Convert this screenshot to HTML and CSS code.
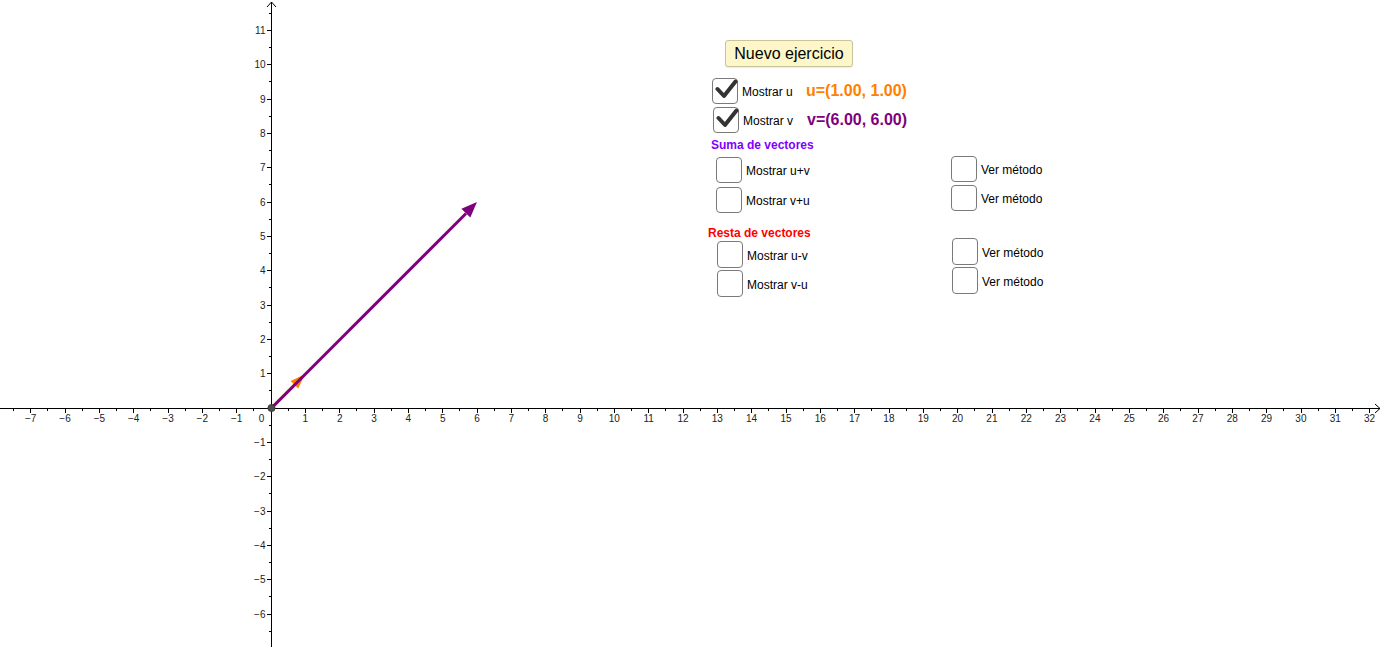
FILE: index.html
```html
<!DOCTYPE html>
<html lang="es">
<head>
<meta charset="utf-8">
<title>Suma y resta de vectores</title>
<link rel="stylesheet" href="styles.css">
</head>
<body>
<div class="app">
  <svg class="canvas" width="1382" height="647" viewBox="0 0 1382 647" xmlns="http://www.w3.org/2000/svg">
    <!-- axes -->
    <g class="axes">
      <line x1="0" y1="408.5" x2="1380" y2="408.5"/>
      <polyline class="arrow" points="1375,404 1380,408.5 1375,413"/>
      <line x1="271.5" y1="2" x2="271.5" y2="647"/>
      <polyline class="arrow" points="267,7 271.5,2 276,7"/>
      <!-- x major ticks -->
      <path d="M30.5 408v5M65.5 408v5M99.5 408v5M133.5 408v5M168.5 408v5M202.5 408v5M236.5 408v5M305.5 408v5M339.5 408v5M374.5 408v5M408.5 408v5M442.5 408v5M477.5 408v5M511.5 408v5M545.5 408v5M580.5 408v5M614.5 408v5M648.5 408v5M683.5 408v5M717.5 408v5M751.5 408v5M786.5 408v5M820.5 408v5M854.5 408v5M889.5 408v5M923.5 408v5M957.5 408v5M992.5 408v5M1026.5 408v5M1060.5 408v5M1095.5 408v5M1129.5 408v5M1163.5 408v5M1198.5 408v5M1232.5 408v5M1266.5 408v5M1301.5 408v5M1335.5 408v5M1369.5 408v5"/>
      <!-- x minor ticks -->
      <path d="M13.5 408v3M47.5 408v3M82.5 408v3M116.5 408v3M150.5 408v3M185.5 408v3M219.5 408v3M253.5 408v3M288.5 408v3M322.5 408v3M356.5 408v3M391.5 408v3M425.5 408v3M459.5 408v3M494.5 408v3M528.5 408v3M562.5 408v3M597.5 408v3M631.5 408v3M665.5 408v3M700.5 408v3M734.5 408v3M768.5 408v3M803.5 408v3M837.5 408v3M871.5 408v3M906.5 408v3M940.5 408v3M974.5 408v3M1009.5 408v3M1043.5 408v3M1077.5 408v3M1112.5 408v3M1146.5 408v3M1180.5 408v3M1215.5 408v3M1249.5 408v3M1283.5 408v3M1318.5 408v3M1352.5 408v3"/>
      <!-- y major ticks -->
      <path d="M267 30.5h5M267 64.5h5M267 99.5h5M267 133.5h5M267 167.5h5M267 202.5h5M267 236.5h5M267 270.5h5M267 305.5h5M267 339.5h5M267 373.5h5M267 442.5h5M267 476.5h5M267 511.5h5M267 545.5h5M267 579.5h5M267 614.5h5"/>
      <!-- y minor ticks -->
      <path d="M269 13.5h3M269 47.5h3M269 81.5h3M269 116.5h3M269 150.5h3M269 184.5h3M269 219.5h3M269 253.5h3M269 287.5h3M269 322.5h3M269 356.5h3M269 390.5h3M269 425.5h3M269 459.5h3M269 493.5h3M269 528.5h3M269 562.5h3M269 596.5h3M269 631.5h3"/>
    </g>
    <!-- x labels -->
    <g class="xlabels">
      <text x="30.7" y="421.5">−7</text>
      <text x="65" y="421.5">−6</text>
      <text x="99.4" y="421.5">−5</text>
      <text x="133.7" y="421.5">−4</text>
      <text x="168" y="421.5">−3</text>
      <text x="202.3" y="421.5">−2</text>
      <text x="236.7" y="421.5">−1</text>
      <text x="261.5" y="421.5">0</text>
      <text x="305.3" y="421.5">1</text>
      <text x="339.7" y="421.5">2</text>
      <text x="374" y="421.5">3</text>
      <text x="408.3" y="421.5">4</text>
      <text x="442.7" y="421.5">5</text>
      <text x="477" y="421.5">6</text>
      <text x="511.3" y="421.5">7</text>
      <text x="545.6" y="421.5">8</text>
      <text x="580" y="421.5">9</text>
      <text x="614.3" y="421.5">10</text>
      <text x="648.6" y="421.5">11</text>
      <text x="683" y="421.5">12</text>
      <text x="717.3" y="421.5">13</text>
      <text x="751.6" y="421.5">14</text>
      <text x="786" y="421.5">15</text>
      <text x="820.3" y="421.5">16</text>
      <text x="854.6" y="421.5">17</text>
      <text x="888.9" y="421.5">18</text>
      <text x="923.3" y="421.5">19</text>
      <text x="957.6" y="421.5">20</text>
      <text x="991.9" y="421.5">21</text>
      <text x="1026.3" y="421.5">22</text>
      <text x="1060.6" y="421.5">23</text>
      <text x="1094.9" y="421.5">24</text>
      <text x="1129.3" y="421.5">25</text>
      <text x="1163.6" y="421.5">26</text>
      <text x="1197.9" y="421.5">27</text>
      <text x="1232.2" y="421.5">28</text>
      <text x="1266.6" y="421.5">29</text>
      <text x="1300.9" y="421.5">30</text>
      <text x="1335.2" y="421.5">31</text>
      <text x="1369.6" y="421.5">32</text>
    </g>
    <!-- y labels -->
    <g class="ylabels">
      <text x="265.5" y="34">11</text>
      <text x="265.5" y="68.2">10</text>
      <text x="265.5" y="102.5">9</text>
      <text x="265.5" y="136.9">8</text>
      <text x="265.5" y="171.2">7</text>
      <text x="265.5" y="205.5">6</text>
      <text x="265.5" y="239.9">5</text>
      <text x="265.5" y="274.2">4</text>
      <text x="265.5" y="308.5">3</text>
      <text x="265.5" y="342.8">2</text>
      <text x="265.5" y="377.2">1</text>
      <text x="265.5" y="445.8">−1</text>
      <text x="265.5" y="480.2">−2</text>
      <text x="265.5" y="514.5">−3</text>
      <text x="265.5" y="548.8">−4</text>
      <text x="265.5" y="583.2">−5</text>
      <text x="265.5" y="617.5">−6</text>
    </g>
    <!-- vector u -->
    <g class="vec-u">
      <line x1="271.5" y1="408" x2="294.5" y2="385"/>
      <polygon points="305,374.2 298.2,388.6 290.6,381"/>
    </g>
    <!-- vector v -->
    <g class="vec-v">
      <line x1="271.5" y1="408" x2="466" y2="213.5"/>
      <polygon points="477,202 470.3,217.6 461.4,208.7"/>
    </g>
    <circle class="origin" cx="271.5" cy="408" r="3.6"/>
  </svg>

  <div class="panel">
    <button class="btn" type="button">Nuevo ejercicio</button>

    <div class="vrow vrow-u">
      <span class="box checked"><svg viewBox="0 0 26 26" width="26" height="26"><polyline points="5.5,11 12,18 23.5,3.5"/></svg></span>
      <span class="lbl lbl-fixed">Mostrar u</span>
      <span class="val val-u">u=(1.00, 1.00)</span>
    </div>
    <div class="vrow vrow-v">
      <span class="box checked"><svg viewBox="0 0 26 26" width="26" height="26"><polyline points="5.5,11 12,18 23.5,3.5"/></svg></span>
      <span class="lbl lbl-fixed">Mostrar v</span>
      <span class="val val-v">v=(6.00, 6.00)</span>
    </div>

    <div class="heading heading-suma">Suma de vectores</div>
    <div class="group group-suma">
      <div class="col col-left">
        <div class="opt"><span class="box"></span><span class="lbl">Mostrar u+v</span></div>
        <div class="opt"><span class="box"></span><span class="lbl">Mostrar v+u</span></div>
      </div>
      <div class="col col-right">
        <div class="opt"><span class="box"></span><span class="lbl">Ver método</span></div>
        <div class="opt"><span class="box"></span><span class="lbl">Ver método</span></div>
      </div>
    </div>

    <div class="heading heading-resta">Resta de vectores</div>
    <div class="group group-resta">
      <div class="col col-left">
        <div class="opt"><span class="box"></span><span class="lbl">Mostrar u-v</span></div>
        <div class="opt"><span class="box"></span><span class="lbl">Mostrar v-u</span></div>
      </div>
      <div class="col col-right">
        <div class="opt"><span class="box"></span><span class="lbl">Ver método</span></div>
        <div class="opt"><span class="box"></span><span class="lbl">Ver método</span></div>
      </div>
    </div>
  </div>
</div>
</body>
</html>
```

FILE: styles.css
```css
html, body {
  margin: 0;
  padding: 0;
  background: #ffffff;
  overflow: hidden;
}

.app {
  position: relative;
  width: 1382px;
  height: 647px;
  font-family: "Liberation Sans", Arial, sans-serif;
  color: #000;
}

.canvas {
  display: block;
}

.axes line,
.axes path,
.axes .arrow {
  stroke: #000;
  stroke-width: 1;
  fill: none;
}

.xlabels text,
.ylabels text {
  font-family: "Liberation Sans", Arial, sans-serif;
  font-size: 10px;
  fill: #222;
}

.xlabels text {
  text-anchor: middle;
}

.ylabels text {
  text-anchor: end;
}

.vec-u line {
  stroke: #ff7f00;
  stroke-width: 3;
}

.vec-u polygon {
  fill: #ff7f00;
}

.vec-v line {
  stroke: #7f007f;
  stroke-width: 3;
}

.vec-v polygon {
  fill: #7f007f;
}

.origin {
  fill: #4d4d4d;
  stroke: #333;
  stroke-width: 0.8;
}

/* Control panel laid over the canvas */
.panel {
  position: absolute;
  left: 706px;
  top: 40px;
  display: flex;
  flex-direction: column;
  align-items: flex-start;
}

.btn {
  margin: 0 0 0 19px;
  width: 128px;
  height: 27px;
  box-sizing: border-box;
  padding: 0;
  background: #fcf6c9;
  border: 1px solid #c9c39c;
  border-radius: 3px;
  font-family: "Liberation Sans", Arial, sans-serif;
  font-size: 16px;
  color: #000;
  line-height: 25px;
  box-shadow: 0 1px 1px rgba(0, 0, 0, 0.08);
}

.vrow {
  display: flex;
  align-items: center;
  height: 26px;
}

.vrow-u {
  margin: 11px 0 0 6px;
}

.vrow-v {
  margin: 3px 0 0 7px;
}

.box {
  display: block;
  flex: none;
  width: 26px;
  height: 26px;
  box-sizing: border-box;
  border: 1.5px solid #7a7a7a;
  border-radius: 4px;
  background: #fff;
  position: relative;
}

.box svg {
  position: absolute;
  left: -1.5px;
  top: -1.5px;
}

.box polyline {
  fill: none;
  stroke: #333;
  stroke-width: 4;
  stroke-linecap: round;
  stroke-linejoin: round;
}

.lbl {
  font-size: 12px;
  line-height: 14px;
  margin-left: 4px;
  padding-top: 2px;
  white-space: nowrap;
}

.lbl-fixed {
  width: 64px;
}

.val {
  font-size: 16px;
  font-weight: bold;
  line-height: 18px;
  white-space: nowrap;
}

.val-u {
  color: #ff7f00;
}

.val-v {
  color: #7f007f;
}

.heading {
  font-size: 12px;
  font-weight: bold;
  line-height: 13px;
  white-space: nowrap;
}

.heading-suma {
  color: #7f00ff;
  margin: 6px 0 0 5px;
}

.heading-resta {
  color: #ff0000;
  margin: 14px 0 0 2px;
}

.group {
  display: flex;
  align-items: flex-start;
}

.col {
  display: flex;
  flex-direction: column;
}

.col-left {
  width: 235px;
}

.opt {
  display: flex;
  align-items: center;
}

.group-suma {
  margin: 5px 0 0 10px;
}

.group-suma .col-left {
  gap: 4px;
}

.group-suma .col-right {
  margin-top: -1px;
  gap: 3px;
}

.group-resta {
  margin: 1px 0 0 11px;
}

.group-resta .box {
  height: 27px;
}

.group-resta .col-left {
  gap: 2px;
}

.group-resta .col-right {
  margin-top: -3px;
  gap: 2px;
}
```
